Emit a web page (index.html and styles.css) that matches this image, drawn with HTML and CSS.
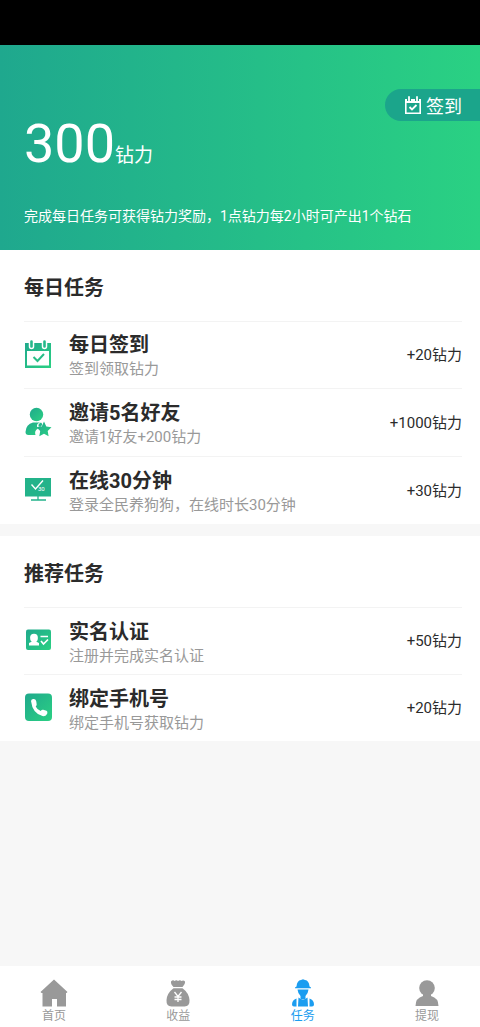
FILE: index.html
```html
<!DOCTYPE html>
<html lang="zh-CN">
<head>
<meta charset="utf-8">
<meta name="viewport" content="width=device-width, initial-scale=1">
<title>任务</title>
<link rel="stylesheet" href="styles.css">
</head>
<body>
<svg class="defs" aria-hidden="true">
  <defs>
    <linearGradient id="green" x1="0" y1="0" x2="1" y2="1">
      <stop offset="0" stop-color="#1fa98c"/>
      <stop offset="1" stop-color="#2bd083"/>
    </linearGradient>
  </defs>
</svg>
<div class="status-bar"></div>
<header class="hero">
  <button class="checkin" type="button">
    <svg class="checkin-icon" viewBox="0 0 18 20" aria-hidden="true">
      <path d="M1.800 5h14.400v13.200H1.800z" fill="none" stroke="#fff" stroke-width="1.600"/>
      <path d="M1 4h16v4H1z" fill="#fff"/>
      <path d="M5 2v4M13 2v4" stroke="#1ba58b" stroke-width="4"/>
      <path d="M5 2v3.500M13 2v3.500" stroke="#fff" stroke-width="1.800" stroke-linecap="round"/>
      <path d="M5.500 12l2.500 2.500 4.500-4.500" fill="none" stroke="#fff" stroke-width="1.800"/>
    </svg>
    签到
  </button>
  <p class="power"><span class="power-value">300</span><span class="power-unit">钻力</span></p>
  <p class="hint">完成每日任务可获得钻力奖励，1点钻力每2小时可产出1个钻石</p>
</header>
<main class="content">
  <section class="card">
    <h2 class="card-title">每日任务</h2>
    <ul class="tasks">
      <li class="task">
        <svg class="task-icon" viewBox="0 0 28 30" aria-hidden="true">
          <path d="M1 4h26v25H1z" fill="url(#green)"/>
          <path d="M3 12h22v14.500H3z" fill="#fff"/>
          <path d="M7.500 2v5.500M20.500 2v5.500" stroke="#fff" stroke-width="5.500" stroke-linecap="round"/>
          <path d="M7.500 2.500v5M20.500 2.500v5" stroke="#25b98a" stroke-width="2.600" stroke-linecap="round"/>
          <path d="M9.500 18l4 4 6.500-7" fill="none" stroke="#27be87" stroke-width="2"/>
        </svg>
        <div class="task-text"><h3 class="task-name">每日签到</h3><p class="task-desc">签到领取钻力</p></div>
        <span class="reward">+20钻力</span>
      </li>
      <li class="task">
        <svg class="task-icon" viewBox="0 0 28 30" aria-hidden="true">
          <circle cx="12.500" cy="7.500" r="6.700" fill="url(#green)"/>
          <path d="M9 15.500h7q-3.500 1-3 4l1 2q-4 2-2.500 6.500H4.500q-3 0-3-3 .5-8 7.500-9.500z" fill="url(#green)"/>
          <path d="M17 15.500q1.500 1 1 2.500l-1.500 2-2-.5q-.5-3 2.500-4z" fill="#23b68a"/>
          <path d="M20 14.500l2.300 4.900 5.200.8-3.800 3.800.9 5.300-4.600-2.500-4.700 2.500.9-5.300-3.700-3.800 5.200-.8z" fill="url(#green)"/>
        </svg>
        <div class="task-text"><h3 class="task-name">邀请5名好友</h3><p class="task-desc">邀请1好友+200钻力</p></div>
        <span class="reward">+1000钻力</span>
      </li>
      <li class="task">
        <svg class="task-icon" viewBox="0 0 28 30" aria-hidden="true">
          <path d="M1 3h26v18.500H1z" fill="#23b38a"/>
          <path d="M14 21v4M7 25h15" fill="none" stroke="#23b38a" stroke-width="1.300"/>
          <path d="M7.500 9.500l4 4.500 7.500-8.500" fill="none" stroke="#fff" stroke-width="1.400"/>
          <text x="14" y="16" class="icon-number">30</text>
        </svg>
        <div class="task-text"><h3 class="task-name">在线30分钟</h3><p class="task-desc">登录全民养狗狗，在线时长30分钟</p></div>
        <span class="reward">+30钻力</span>
      </li>
    </ul>
  </section>
  <section class="card card-compact">
    <h2 class="card-title">推荐任务</h2>
    <ul class="tasks">
      <li class="task">
        <svg class="task-icon" viewBox="0 0 28 30" aria-hidden="true">
          <rect x="2" y="4.500" width="25" height="20.500" rx="2" fill="url(#green)"/>
          <ellipse cx="10" cy="13" rx="3.900" ry="4.200" fill="#fff"/>
          <path d="M8 15h4v1.500l3 1.500v2.500H5V18l3-1.500z" fill="#fff"/>
          <path d="M16.500 11.500H24M17 16l2.500 3 4.500-4.500" fill="none" stroke="#fff" stroke-width="1.700"/>
        </svg>
        <div class="task-text"><h3 class="task-name">实名认证</h3><p class="task-desc">注册并完成实名认证</p></div>
        <span class="reward">+50钻力</span>
      </li>
      <li class="task">
        <svg class="task-icon" viewBox="0 0 28 30" aria-hidden="true">
          <rect x="1" y="1.500" width="27" height="27.500" rx="4" fill="url(#green)"/>
          <path d="M7 9q.5-2.500 3-2 2 0 2.300 2.500l.4 3q0 1.200-1 2 1.500 3.300 5 4.500 1-1.500 2.500-1.200l3.300 1q1.300.7.8 2.700-1.300 3.300-4.800 2.500Q8.500 21.500 7 9z" fill="#fff"/>
        </svg>
        <div class="task-text"><h3 class="task-name">绑定手机号</h3><p class="task-desc">绑定手机号获取钻力</p></div>
        <span class="reward">+20钻力</span>
      </li>
    </ul>
  </section>
</main>
<nav class="tabs">
  <a class="tab" href="#home">
    <svg class="tab-icon" viewBox="0 0 28 28" aria-hidden="true">
      <path d="M14 .5L27.500 13l-1 1H26v13.500h-9V20h-5v7.500H2.500V14h-1l-1-1z" fill="currentColor"/>
    </svg>
    首页
  </a>
  <a class="tab" href="#income">
    <svg class="tab-icon" viewBox="0 0 28 28" aria-hidden="true">
      <path d="M7 2.500q2-2 3.500-.5 2-1.300 3.500 0 2-1.300 3.500 0 2-1.300 3.500.5.500 2-2.500 5.500H9.500Q6.500 5 7 2.500z" fill="currentColor"/>
      <path d="M9.500 9.200h9Q25 14 25.500 21q.3 6.500-5 6.500h-13q-5.300 0-5-6.500Q3 14 9.500 9.200z" fill="currentColor"/>
      <path d="M10.500 13l3.500 4.500 3.500-4.500M10.500 18h7M10.500 20.500h7M14 17.500V23" fill="none" stroke="#fff" stroke-width="1.300"/>
    </svg>
    收益
  </a>
  <a class="tab tab-active" href="#tasks" aria-current="page">
    <svg class="tab-icon" viewBox="0 0 28 28" aria-hidden="true">
      <path d="M7.500 7.500Q8 1.500 12 1l2-.8L16 1q4 .5 4.500 6.500l1.500 1v.800H6v-.8z" fill="currentColor"/>
      <path d="M8.500 10.500h11q-.5 4.500-3 6.500v3h-5v-3q-2.500-2-3-6.500z" fill="currentColor"/>
      <path d="M9.500 18.500q4.500 4 9 0l.5 9H9z" fill="currentColor"/>
      <path d="M7.500 19.500v8H5q-2 0-2-2 0-4.500 4.500-6zM20.500 19.500v8H23q2 0 2-2 0-4.500-4.500-6z" fill="currentColor"/>
    </svg>
    任务
  </a>
  <a class="tab" href="#withdraw">
    <svg class="tab-icon" viewBox="0 0 28 28" aria-hidden="true">
      <circle cx="14" cy="9" r="7.800" fill="currentColor"/>
      <path d="M10 15h8v2q7.500 2 7.500 10H2.500Q2.500 19 10 17z" fill="currentColor"/>
    </svg>
    提现
  </a>
</nav>
</body>
</html>
```
FILE: styles.css
```css
* {
  box-sizing: border-box;
}

body {
  margin: 0;
  min-height: 100vh;
  display: flex;
  flex-direction: column;
  background: #f7f7f7;
  color: #2b2b2b;
  font-family: Roboto, "Noto Sans CJK SC", sans-serif;
}

h2, h3, p, ul {
  margin: 0;
  padding: 0;
}

.defs {
  position: absolute;
  width: 0;
  height: 0;
}

.status-bar {
  height: 45px;
  background: #000;
}

.hero {
  display: flex;
  flex-direction: column;
  padding: 44px 0 24px 24px;
  background: linear-gradient(90deg, #1fa88e, #2ad183);
  color: #fff;
}

.checkin {
  align-self: flex-end;
  display: flex;
  align-items: center;
  gap: 4px;
  height: 32px;
  padding: 0 18px 0 19px;
  border: 0;
  border-radius: 16px 0 0 16px;
  background: #1ba58b;
  color: #fff;
  font: inherit;
  font-size: 18px;
}

.checkin-icon {
  width: 18px;
  height: 20px;
}

.power {
  display: flex;
  align-items: baseline;
  line-height: 60px;
  margin-top: -7px;
}

.power-value {
  font-size: 54px;
}

.power-unit {
  font-size: 19px;
}

.hint {
  margin-top: 20px;
  font-size: 14px;
  line-height: 20px;
}

.content {
  flex: 1;
  display: flex;
  flex-direction: column;
  gap: 12px;
}

.card {
  padding: 0 18px 0 24px;
  background: #fff;
}

.card-title {
  padding: 23px 0 18px;
  font-size: 20px;
  line-height: 30px;
  font-weight: 700;
}

.tasks {
  list-style: none;
}

.task {
  display: flex;
  align-items: center;
  min-height: 68px;
  border-top: 1px solid #f3f3f3;
}

.task:first-child,
.card-compact .task {
  min-height: 67px;
}

.task-icon {
  flex: none;
  width: 28px;
  height: 30px;
  margin: 0 17px 2px 0;
}

.icon-number {
  fill: #fff;
  font-size: 6px;
}

.task-text {
  flex: 1;
  padding-top: 2px;
}

.card-compact .task-text {
  padding-top: 4px;
}

.task-name {
  font-size: 20px;
  line-height: 26px;
  font-weight: 700;
}

.task-desc {
  color: #999;
  font-size: 15px;
  line-height: 22px;
}

.reward {
  padding-bottom: 3px;
  font-size: 15px;
}

.tabs {
  display: flex;
  justify-content: space-between;
  padding: 13px 39px 2px 40px;
  background: #fff;
}

.tab {
  display: flex;
  flex-direction: column;
  align-items: center;
  color: #999;
  font-size: 12px;
  line-height: 18px;
  text-decoration: none;
}

.tab-active {
  color: #1b9df0;
}

.tab-icon {
  width: 28px;
  height: 28px;
}
```
